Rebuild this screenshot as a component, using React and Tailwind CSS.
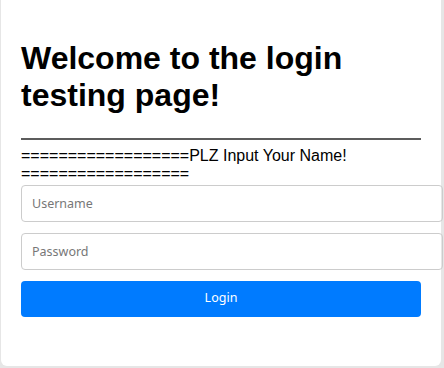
export default function App() {
  return (
    <div className="min-h-screen bg-[#e6e6e6] pl-[1px] pb-[2px] font-['Liberation_Sans',Arial,sans-serif]">
      <div className="w-[440px] h-[366px] bg-white rounded-b-[6px] px-5 pt-[40px]">
        <h1 className="text-[32px] leading-[37px] font-bold text-black">
          Welcome to the login testing page!
        </h1>
        <hr className="mt-[24px] border-0 border-t-[2px] border-[#5c5c5c]" />
        <p className="mt-[7px] text-[16px] leading-[18.4px] text-black whitespace-nowrap">
          ==================PLZ Input Your Name!
          <br />
          ==================
        </p>
        <form className="mt-[1px] flex flex-col">
          <input
            type="text"
            placeholder="Username"
            className="w-[422px] h-[37px] border border-[#cccccc] rounded-[4px] px-[10px] text-[12.5px] font-['Noto_Sans',sans-serif] placeholder:text-[#777777] outline-none"
          />
          <input
            type="password"
            placeholder="Password"
            className="mt-[11px] w-[422px] h-[37px] border border-[#cccccc] rounded-[4px] px-[10px] text-[12.5px] font-['Noto_Sans',sans-serif] placeholder:text-[#777777] outline-none"
          />
          <button
            type="button"
            className="mt-[11px] w-[400px] h-[36px] bg-[#007bff] text-white rounded-[4px] text-[12.5px] font-['Noto_Sans',sans-serif]"
          >
            Login
          </button>
        </form>
      </div>
    </div>
  );
}
